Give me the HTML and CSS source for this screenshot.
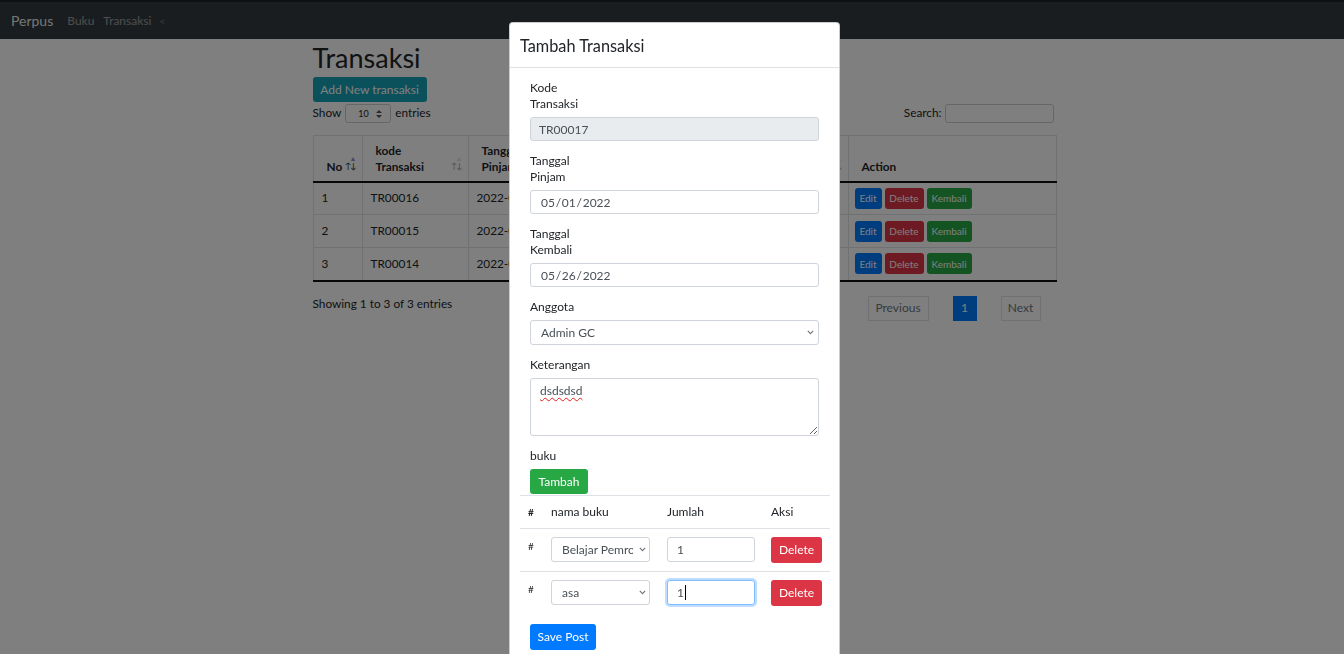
FILE: index.html
```html
<!DOCTYPE html>
<html lang="id">
<head>
<meta charset="utf-8">
<title>Transaksi</title>
<link rel="stylesheet" href="styles.css">
</head>
<body>
<nav class="navbar">
  <span class="brand">Perpus</span>
  <a class="nav-link">Buku</a>
  <a class="nav-link">Transaksi</a>
  <span class="nav-caret">&lt;</span>
</nav>

<main class="container">
  <h1 class="page-title">Transaksi</h1>
  <button class="btn btn-info btn-add">Add New transaksi</button>
  <div class="dt-top">
    <div class="dt-length">Show
      <span class="mini-select">10
        <svg class="updown" width="6" height="8" viewBox="0 0 6 8"><path d="M3 0L6 3H0z M3 8L0 5H6z" fill="#555"/></svg>
      </span>
      entries</div>
    <div class="dt-search">Search: <span class="search-box"></span></div>
  </div>

  <table class="dt">
    <colgroup>
      <col class="c-no"><col class="c-kode"><col class="c-pinjam"><col class="c-kembali"><col class="c-anggota"><col class="c-action">
    </colgroup>
    <thead>
      <tr>
        <th>No<span class="sort active"><span class="tri">&#9650;</span>&#8593;&#8595;</span></th>
        <th>kode<br>Transaksi<span class="sort"><span class="tri faded">&#9650;</span>&#8593;&#8595;</span></th>
        <th>Tanggal<br>Pinjam<span class="sort"><span class="tri faded">&#9650;</span>&#8593;&#8595;</span></th>
        <th>Tanggal<br>Kembali<span class="sort"><span class="tri faded">&#9650;</span>&#8593;&#8595;</span></th>
        <th>Anggota<span class="sort"><span class="tri faded">&#9650;</span>&#8593;&#8595;</span></th>
        <th>Action</th>
      </tr>
    </thead>
    <tbody>
      <tr>
        <td>1</td><td>TR00016</td><td>2022-05-01</td><td>2022-05-08</td><td>Admin GC</td>
        <td><div class="actions"><button class="btn btn-xs btn-primary">Edit</button><button class="btn btn-xs btn-danger">Delete</button><button class="btn btn-xs btn-success">Kembali</button></div></td>
      </tr>
      <tr>
        <td>2</td><td>TR00015</td><td>2022-05-01</td><td>2022-05-08</td><td>Admin GC</td>
        <td><div class="actions"><button class="btn btn-xs btn-primary">Edit</button><button class="btn btn-xs btn-danger">Delete</button><button class="btn btn-xs btn-success">Kembali</button></div></td>
      </tr>
      <tr>
        <td>3</td><td>TR00014</td><td>2022-05-01</td><td>2022-05-08</td><td>Admin GC</td>
        <td><div class="actions"><button class="btn btn-xs btn-primary">Edit</button><button class="btn btn-xs btn-danger">Delete</button><button class="btn btn-xs btn-success">Kembali</button></div></td>
      </tr>
    </tbody>
  </table>

  <div class="dt-bottom">
    <div class="dt-info">Showing 1 to 3 of 3 entries</div>
    <div class="pager">
      <span class="pg pg-disabled">Previous</span>
      <span class="pg pg-current">1</span>
      <span class="pg pg-disabled">Next</span>
    </div>
  </div>
</main>

<div class="backdrop"></div>

<div class="modal">
  <div class="modal-header">
    <h5 class="modal-title">Tambah Transaksi</h5>
  </div>
  <div class="modal-body">
    <div class="form-group">
      <label class="lbl">Kode<br>Transaksi</label>
      <input class="form-control readonly" type="text" value="TR00017" readonly>
    </div>
    <div class="form-group">
      <label class="lbl">Tanggal<br>Pinjam</label>
      <input class="form-control date" type="text" value="05&#8202;/&#8202;01&#8202;/&#8202;2022">
    </div>
    <div class="form-group">
      <label class="lbl">Tanggal<br>Kembali</label>
      <input class="form-control date" type="text" value="05&#8202;/&#8202;26&#8202;/&#8202;2022">
    </div>
    <div class="form-group">
      <label class="lbl">Anggota</label>
      <div class="select-wrap">
        <select class="form-control select"><option>Admin GC</option></select>
        <svg class="chev" width="7" height="5" viewBox="0 0 7 5"><path d="M0.8 0.8L3.5 3.6L6.2 0.8" fill="none" stroke="#6c757d" stroke-width="1.1"/></svg>
      </div>
    </div>
    <div class="form-group">
      <label class="lbl">Keterangan</label>
      <textarea class="form-control textarea" spellcheck="true">dsdsdsd</textarea>
    </div>
    <div class="form-group group-buku">
      <label class="lbl">buku</label>
      <button class="btn btn-success btn-tambah">Tambah</button>
    </div>

    <table class="mtable">
      <colgroup><col class="m-hash"><col class="m-nama"><col class="m-jumlah"><col class="m-aksi"></colgroup>
      <thead>
        <tr><th class="hash">#</th><th>nama buku</th><th>Jumlah</th><th>Aksi</th></tr>
      </thead>
      <tbody>
        <tr>
          <td class="hash">#</td>
          <td>
            <div class="select-wrap">
              <select class="form-control select sm"><option>Belajar Pemrograman</option></select>
              <svg class="chev" width="7" height="5" viewBox="0 0 7 5"><path d="M0.8 0.8L3.5 3.6L6.2 0.8" fill="none" stroke="#6c757d" stroke-width="1.1"/></svg>
            </div>
          </td>
          <td><input class="form-control qty" type="text" value="1"></td>
          <td><button class="btn btn-danger btn-del">Delete</button></td>
        </tr>
        <tr>
          <td class="hash">#</td>
          <td>
            <div class="select-wrap">
              <select class="form-control select sm"><option>asa</option></select>
              <svg class="chev" width="7" height="5" viewBox="0 0 7 5"><path d="M0.8 0.8L3.5 3.6L6.2 0.8" fill="none" stroke="#6c757d" stroke-width="1.1"/></svg>
            </div>
          </td>
          <td><div class="form-control qty focused">1<span class="caret"></span></div></td>
          <td><button class="btn btn-danger btn-del">Delete</button></td>
        </tr>
      </tbody>
    </table>

    <button class="btn btn-primary btn-save">Save Post</button>
  </div>
</div>
</body>
</html>
```

FILE: styles.css
```css
* { box-sizing: border-box; }

html, body {
  margin: 0;
  height: 100%;
  overflow: hidden;
}

body {
  background: #fff;
  color: #212529;
  font-family: "Lato", "Noto Sans", sans-serif;
  font-size: 11.8px;
  line-height: 16px;
}

button {
  font-family: inherit;
}

/* ---------- navbar ---------- */
.navbar {
  height: 39px;
  background: #343a40;
  border-top: 2px solid #1d2125;
  display: flex;
  align-items: center;
  padding: 0 11px;
}
.brand {
  color: rgba(255, 255, 255, .92);
  font-size: 14px;
  margin-right: 14px;
}
.nav-link {
  color: rgba(255, 255, 255, .5);
  font-size: 12px;
  margin-right: 9px;
}
.nav-caret {
  color: rgba(255, 255, 255, .35);
  font-size: 10px;
  margin-left: -1px;
}

/* ---------- page ---------- */
.container {
  max-width: 769px;
  margin: 0 auto;
  padding-left: 25px;
}
.page-title {
  font-size: 27px;
  font-weight: 400;
  line-height: 32px;
  margin: 3px 0 3px;
}

.btn {
  border: 1px solid transparent;
  border-radius: 3px;
  color: #fff;
  font-size: 12px;
  line-height: 16px;
  padding: 0 8px;
  cursor: pointer;
}
.btn-info { background: #17a2b8; }
.btn-primary { background: #007bff; }
.btn-danger { background: #dc3545; }
.btn-success { background: #28a745; }

.btn-add {
  height: 25px;
  width: 114px;
  padding: 0;
  font-size: 12px;
}

.dt-top {
  display: flex;
  justify-content: space-between;
  align-items: center;
  height: 20px;
  margin-top: 1px;
  padding-right: 3px;
}
.dt-length, .dt-search {
  display: flex;
  align-items: center;
  gap: 3px;
}
.mini-select {
  width: 46px;
  height: 19px;
  border: 1px solid #c8ccd0;
  border-radius: 3px;
  display: inline-flex;
  align-items: center;
  justify-content: space-between;
  padding: 2px 8px 0 12px;
  font-size: 9px;
  margin: 0 1px;
}
.search-box {
  display: inline-block;
  width: 109px;
  height: 19px;
  border: 1px solid #c8ccd0;
  border-radius: 3px;
}

/* ---------- main table ---------- */
.dt {
  width: 743px;
  table-layout: fixed;
  border-collapse: collapse;
  margin-top: 12px;
  border: 1px solid #dee2e6;
}
.c-no { width: 49px; }
.c-kode { width: 106px; }
.c-pinjam { width: 120px; }
.c-kembali { width: 130px; }
.c-anggota { width: 130px; }
.c-action { width: 208px; }

.dt th {
  position: relative;
  height: 46px;
  text-align: left;
  vertical-align: bottom;
  font-weight: 700;
  padding: 6px 12px 6px 13px;
  border-left: 1px solid #dee2e6;
  border-bottom: 2px solid #111;
  line-height: 16px;
}
.sort {
  position: absolute;
  right: 6px;
  bottom: 11px;
  font-size: 8.5px;
  line-height: 8px;
  font-weight: 400;
  color: #999;
  letter-spacing: -1px;
}
.sort.active { color: #212529; right: 6px; }
.tri {
  position: absolute;
  right: 0;
  top: -8px;
  font-size: 7px;
  color: #8c8ccc;
}
.tri.faded { color: #ddd; }

.dt td {
  height: 33px;
  padding: 0 7px 0 8px;
  border: 1px solid #dee2e6;
  vertical-align: middle;
  white-space: nowrap;
  overflow: hidden;
}
.dt td:last-child { padding-left: 6px; }
.dt tbody tr:last-child td {
  border-bottom: 2px solid #111;
}
.actions {
  display: flex;
  gap: 3px;
}
.btn-xs {
  height: 21px;
  font-size: 10px;
  padding: 0;
}
.btn-xs.btn-primary { width: 27px; }
.btn-xs.btn-danger { width: 39px; }
.btn-xs.btn-success { width: 45px; }

.dt-bottom {
  display: flex;
  justify-content: space-between;
  align-items: flex-start;
  margin-top: 14px;
}
.pager {
  display: flex;
  gap: 24px;
  margin-right: 16px;
}
.pg {
  height: 25px;
  display: flex;
  align-items: center;
  justify-content: center;
  font-size: 12px;
}
.pg-disabled {
  border: 1px solid #dee2e6;
  color: #6c757d;
  padding: 0 8px;
}
.pg-disabled:first-child { width: 61px; }
.pg-disabled:last-child { width: 40px; }
.pg-current {
  width: 24px;
  background: #007bff;
  color: #fff;
}

/* ---------- backdrop + modal ---------- */
.backdrop {
  position: fixed;
  inset: 0;
  background: rgba(0, 0, 0, .5);
  z-index: 10;
}
.modal {
  position: fixed;
  top: 22px;
  left: 509px;
  width: 331px;
  background: #fff;
  border: 1px solid rgba(0, 0, 0, .2);
  border-radius: 4px;
  z-index: 20;
  font-size: 12px;
}
.modal-header {
  height: 45px;
  display: flex;
  align-items: center;
  padding: 2px 10px 0;
  border-bottom: 1px solid #dee2e6;
}
.modal-title {
  margin: 0;
  font-size: 16.3px;
  font-weight: 400;
  line-height: 20px;
}
.modal-body {
  padding: 12px 10px 20px;
}
.form-group {
  padding: 0 10px;
  margin-bottom: 12px;
}
.lbl {
  display: block;
  margin-bottom: 5px;
  font-size: 12px;
}
.form-control {
  display: block;
  width: 100%;
  height: 24px;
  border: 1px solid #ced4da;
  border-radius: 3px;
  background: #fff;
  color: #495057;
  font-family: inherit;
  font-size: 12px;
  padding: 0 9px;
  outline: none;
}
.readonly {
  background: #e9ecef;
  padding-left: 8px;
}
.date { padding-left: 10px; }

.select-wrap {
  position: relative;
}
.select {
  -webkit-appearance: none;
  appearance: none;
  height: 25px;
  padding-left: 10px;
  padding-right: 16px;
}
.chev {
  position: absolute;
  right: 5px;
  top: 10px;
  pointer-events: none;
}
.textarea {
  height: 58px;
  resize: vertical;
  padding: 4px 9px;
  text-decoration: underline wavy #e02020;
  text-decoration-thickness: 1px;
  text-underline-offset: 2px;
  line-height: 16px;
}
.group-buku {
  margin-bottom: 0;
}
.btn-tambah {
  height: 25px;
  width: 58px;
  padding: 0;
  font-size: 12px;
}

/* ---------- modal table ---------- */
.mtable {
  width: 310px;
  table-layout: fixed;
  border-collapse: collapse;
  margin-top: 1px;
}
.m-hash { width: 23px; }
.m-nama { width: 116px; }
.m-jumlah { width: 104px; }
.m-aksi { width: 67px; }

.mtable th {
  text-align: left;
  font-weight: 400;
  padding: 8px 8px;
  border-top: 1px solid #dee2e6;
  line-height: 16px;
  font-size: 12px;
}
.mtable td {
  padding: 8px 8px 8px;
  border-top: 1px solid #dee2e6;
  vertical-align: top;
}
.mtable .hash {
  font-size: 10px;
  padding-left: 8px;
  padding-right: 0;
}
.mtable td.hash { padding-top: 9px; }
.mtable th.hash { font-weight: 700; }

.select.sm {
  height: 25px;
  width: 99px;
  white-space: nowrap;
  overflow: hidden;
  text-overflow: clip;
  padding-left: 10px;
}
.qty {
  height: 25px;
  line-height: 23px;
  padding-left: 9px;
}
.focused {
  border-color: #80bdff;
  box-shadow: 0 0 0 2px rgba(0, 123, 255, .25);
}
.caret {
  display: inline-block;
  width: 1px;
  height: 15px;
  background: #000;
  vertical-align: -3px;
  margin-left: 1px;
}
.btn-del {
  height: 26px;
  width: 51px;
  padding: 0;
  font-size: 12px;
}
.btn-save {
  margin: 10px 0 0 10px;
  height: 26px;
  width: 66px;
  padding: 0;
  font-size: 12px;
}
```
